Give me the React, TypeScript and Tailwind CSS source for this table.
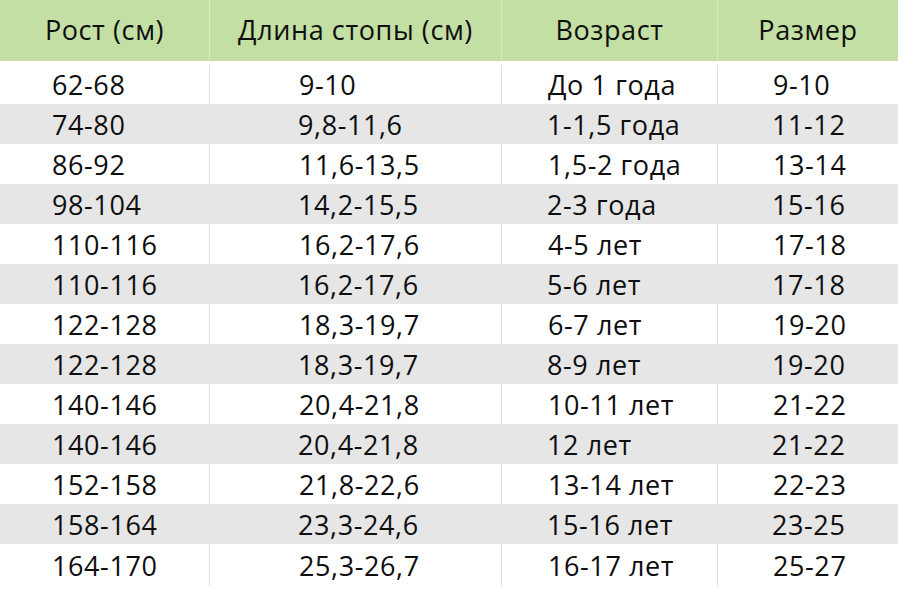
import React from "react";

const rows: [string, string, string, string][] = [
  ["62-68", "9-10", "До 1 года", "9-10"],
  ["74-80", "9,8-11,6", "1-1,5 года", "11-12"],
  ["86-92", "11,6-13,5", "1,5-2 года", "13-14"],
  ["98-104", "14,2-15,5", "2-3 года", "15-16"],
  ["110-116", "16,2-17,6", "4-5 лет", "17-18"],
  ["110-116", "16,2-17,6", "5-6 лет", "17-18"],
  ["122-128", "18,3-19,7", "6-7 лет", "19-20"],
  ["122-128", "18,3-19,7", "8-9 лет", "19-20"],
  ["140-146", "20,4-21,8", "10-11 лет", "21-22"],
  ["140-146", "20,4-21,8", "12 лет", "21-22"],
  ["152-158", "21,8-22,6", "13-14 лет", "22-23"],
  ["158-164", "23,3-24,6", "15-16 лет", "23-25"],
  ["164-170", "25,3-26,7", "16-17 лет", "25-27"],
];

const headers = ["Рост (см)", "Длина стопы (см)", "Возраст", "Размер"];
const pads = ["pl-[52px]", "pl-[89px]", "pl-[46px]", "pl-[55px]"];

export default function App() {
  return (
    <div
      className="w-[898px] h-[590px] bg-white overflow-hidden text-[#0e0e0e]"
      style={{ fontFamily: '"Open Sans", "Noto Sans", sans-serif' }}
    >
      <div className="grid grid-cols-[209px_292px_216px_181px] h-[61px] bg-[#c3dfa4]">
        {headers.map((h, i) => (
          <div
            key={h}
            className={`flex items-center justify-center text-[27px] tracking-[0.6px] ${i > 0 ? "border-l border-[#d8ebc4]" : ""}`}
          >
            {h}
          </div>
        ))}
      </div>
      {rows.map((r, ri) => {
        const gray = ri % 2 === 1;
        const last = ri === rows.length - 1;
        return (
          <div
            key={ri}
            className={`grid grid-cols-[209px_292px_216px_181px] ${ri === 0 ? "h-[43px] pt-[4px]" : last ? "h-[46px] pb-[4px]" : "h-[40px]"} ${gray ? "bg-[#e6e6e6]" : "bg-white"}`}
          >
            {r.map((c, ci) => (
              <div
                key={ci}
                className={`flex items-center text-[27px] tracking-[0.6px] leading-none ${pads[ci]} ${!gray && ci > 0 ? "border-l border-[#e0e0e0]" : ""}`}
              >
                {c}
              </div>
            ))}
          </div>
        );
      })}
    </div>
  );
}
